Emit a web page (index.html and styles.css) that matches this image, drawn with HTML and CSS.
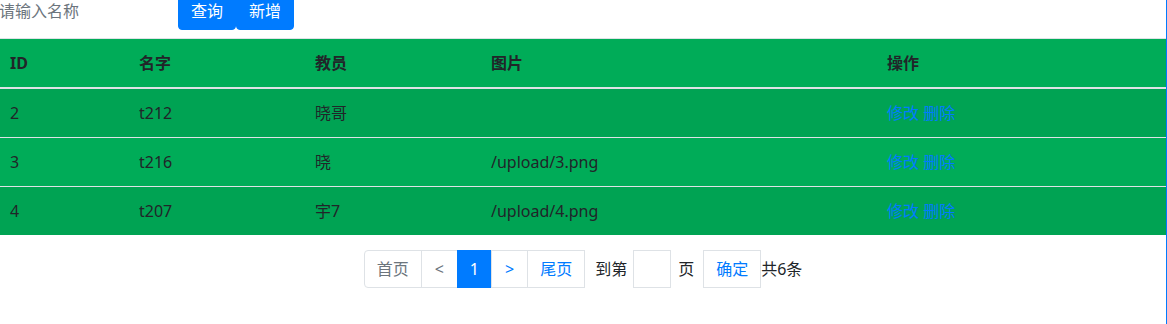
FILE: index.html
```html
<!DOCTYPE html>
<html lang="zh-CN">
<head>
    <meta charset="UTF-8">
    <meta name="viewport" content="width=device-width, initial-scale=1.0">
    <title>教员管理</title>
    <link rel="stylesheet" href="styles.css">
</head>
<body>

    <div class="page">
        <div class="toolbar">
            <input type="text" class="search-input" placeholder="请输入名称">
            <button class="btn btn-primary">查询</button>
            <button class="btn btn-primary">新增</button>
        </div>

        <table class="data-table">
            <thead>
                <tr>
                    <th class="col-id">ID</th>
                    <th class="col-name">名字</th>
                    <th class="col-teacher">教员</th>
                    <th class="col-pic">图片</th>
                    <th>操作</th>
                </tr>
            </thead>
            <tbody>
                <tr>
                    <td>2</td>
                    <td>t212</td>
                    <td>晓哥</td>
                    <td></td>
                    <td><a href="#">修改</a> <a href="#">删除</a></td>
                </tr>
                <tr>
                    <td>3</td>
                    <td>t216</td>
                    <td>晓</td>
                    <td>/upload/3.png</td>
                    <td><a href="#">修改</a> <a href="#">删除</a></td>
                </tr>
                <tr>
                    <td>4</td>
                    <td>t207</td>
                    <td>宇7</td>
                    <td>/upload/4.png</td>
                    <td><a href="#">修改</a> <a href="#">删除</a></td>
                </tr>
            </tbody>
        </table>

        <div class="pager">
            <ul class="pagination">
                <li class="page-item disabled"><a class="page-link" href="#">首页</a></li>
                <li class="page-item disabled"><a class="page-link arrow" href="#">&lt;</a></li>
                <li class="page-item active"><a class="page-link" href="#">1</a></li>
                <li class="page-item"><a class="page-link arrow" href="#">&gt;</a></li>
                <li class="page-item"><a class="page-link" href="#">尾页</a></li>
            </ul>
            <span class="jump-label">到第</span>
            <input type="text" class="jump-input">
            <span class="jump-unit">页</span>
            <button class="jump-btn">确定</button>
            <span class="total">共6条</span>
        </div>
    </div>

</body>
</html>
```

FILE: styles.css
```css
body {
    margin: 0;
    font-family: "Segoe UI", "Noto Sans", "Noto Sans CJK SC", sans-serif;
    font-size: 16px;
    line-height: 1.5;
    color: #212529;
    background-color: #fff;
}
.page {
    min-height: 324px;
    border-right: 1px solid #007bff;
    box-sizing: border-box;
    overflow: hidden;
}
.toolbar {
    display: flex;
    align-items: center;
    margin-top: -8px;
    margin-bottom: 8px;
    height: 38px;
}
.search-input {
    width: 179px;
    height: 38px;
    padding: 0;
    margin-left: -1px;
    border: none;
    outline: none;
    font: inherit;
    color: #495057;
    box-sizing: border-box;
}
.search-input::placeholder {
    color: #6c757d;
}
.btn {
    height: 38px;
    padding: 6px 12px;
    border: 1px solid transparent;
    border-radius: 4px;
    font: inherit;
    cursor: pointer;
}
.btn-primary {
    background-color: #007bff;
    border-color: #007bff;
    color: white;
}
.data-table {
    width: 100%;
    border-collapse: collapse;
    background-color: #00ac58;
}
.data-table th, .data-table td {
    padding: 12px 10px;
    text-align: left;
    vertical-align: top;
    border-top: 1px solid #dee2e6;
}
.data-table th {
    border-bottom: 2px solid #dee2e6;
    font-weight: bold;
}
.data-table tbody tr:nth-of-type(odd) {
    background-color: rgba(0, 0, 0, 0.05);
}
.col-id {
    width: 109px;
}
.col-name, .col-teacher {
    width: 156px;
}
.col-pic {
    width: 376px;
}
.data-table a {
    color: #007bff;
    text-decoration: none;
}
.pager {
    display: flex;
    align-items: center;
    justify-content: center;
    margin-top: 15px;
}
.pagination {
    display: flex;
    list-style: none;
    margin: 0;
    padding: 0;
}
.page-link {
    display: block;
    padding: 8px 12px;
    line-height: 20px;
    border: 1px solid #dee2e6;
    margin-left: -1px;
    color: #007bff;
    background-color: #fff;
    text-decoration: none;
}
.page-link.arrow {
    padding: 8px 13px;
}
.page-item:first-child .page-link {
    margin-left: 0;
    border-top-left-radius: 4px;
    border-bottom-left-radius: 4px;
}
.page-item.disabled .page-link {
    color: #6c757d;
}
.page-item.active .page-link {
    background-color: #007bff;
    border-color: #007bff;
    color: white;
}
.jump-label {
    margin-left: 10px;
}
.jump-input {
    width: 38px;
    height: 38px;
    margin-left: 6px;
    border: 1px solid #dee2e6;
    box-sizing: border-box;
    font: inherit;
    text-align: center;
    outline: none;
}
.jump-unit {
    margin-left: 7px;
}
.jump-btn {
    height: 38px;
    margin-left: 9px;
    padding: 8px 12px;
    border: 1px solid #dee2e6;
    background-color: #fff;
    color: #007bff;
    font: inherit;
    line-height: 20px;
    cursor: pointer;
}
```
